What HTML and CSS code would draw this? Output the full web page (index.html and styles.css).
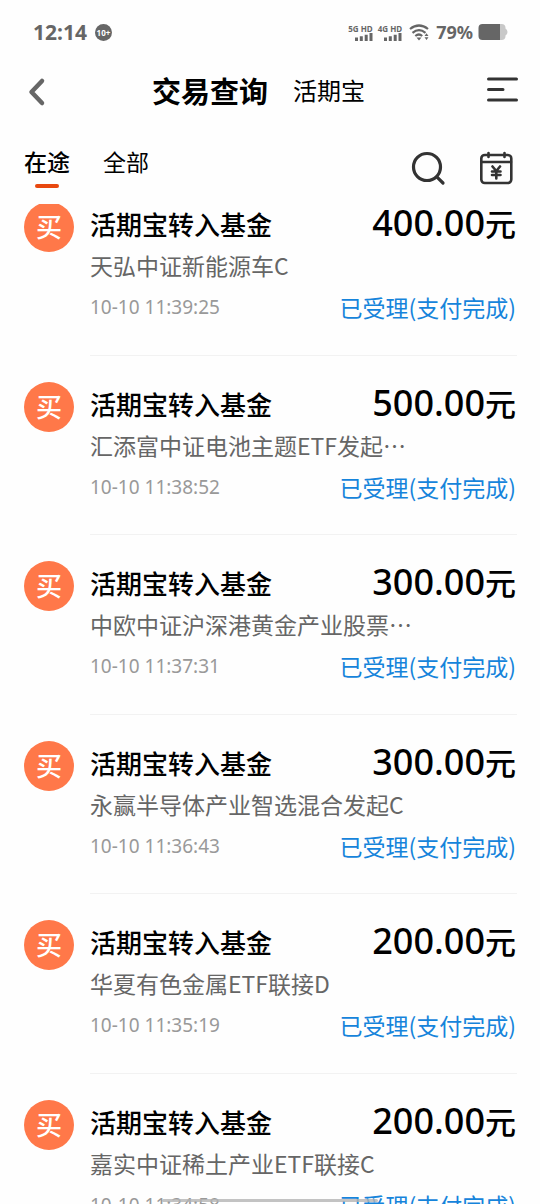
FILE: index.html
```html
<!DOCTYPE html>
<html lang="zh-CN">
    <head>
        <meta charset="utf-8" />
        <meta name="viewport" content="width=device-width, initial-scale=1" />
        <title>交易查询</title>
        <link rel="stylesheet" href="styles.css">
    </head>

    <body>
        <div class="status-bar">
            <span class="clock">12:14</span>
            <span class="notice">10+</span>
            <div class="signal">
                <span>5G HD</span>
                <svg width="18" height="8" viewBox="0 0 18 8"><path d="M1.5 4.5V8M6.3 3.2V8M11.2 1.8V8M16 0V8"/></svg>
            </div>
            <div class="signal">
                <span>4G HD</span>
                <svg width="18" height="8" viewBox="0 0 18 8"><path d="M1.5 4.5V8M6.3 3.2V8M11.2 1.8V8M16 0V8"/></svg>
            </div>
            <svg class="wifi" width="20" height="17" viewBox="0 0 20 17">
                <path d="M1 5Q10-2 19 5M3.5 8.8Q10 3.5 16.5 8.8M6.3 12Q10 9 13.2 12" fill="none" stroke="#666" stroke-width="2.2"/>
                <path d="M7.5 13.5h5L10 16.5zM15.5 12l2-2.7 2 2.7zM15.5 13.3l2 2.7 2-2.7z" fill="#666"/>
            </svg>
            <span class="percent">79%</span>
            <svg class="battery" width="30" height="16" viewBox="0 0 30 16">
                <path d="M22 0h1.5a4 4 0 0 1 4 4v.5q2 1 2 3.5t-2 3.5v.5a4 4 0 0 1-4 4H22z" fill="#c8c8c8"/>
                <path d="M4.5 0H22v16H4.5a4 4 0 0 1-4-4V4a4 4 0 0 1 4-4z" fill="#666"/>
            </svg>
        </div>

        <header class="header">
            <button class="icon-button" type="button" aria-label="返回">
                <svg width="32" height="32" viewBox="0 0 32 32"><path d="M20 6L9.5 17L20 28" fill="none" stroke="#666" stroke-width="4.5" stroke-linecap="round" stroke-linejoin="round"/></svg>
            </button>
            <div class="heading">
                <h1>交易查询</h1>
                <span>活期宝</span>
            </div>
            <button class="icon-button" type="button" aria-label="菜单">
                <svg width="32" height="32" viewBox="0 0 32 32"><path d="M1.5 4H29.5M1.5 14.5H16M1.5 25H29.5" fill="none" stroke="#333" stroke-width="3" stroke-linecap="round"/></svg>
            </button>
        </header>

        <nav class="tabs">
            <button class="tab active" type="button">在途</button>
            <button class="tab" type="button">全部</button>
            <div class="tools">
                <button class="icon-button" type="button" aria-label="搜索">
                    <svg width="36" height="36" viewBox="0 0 36 36"><g fill="none" stroke="#333" stroke-width="3.2" stroke-linecap="round"><circle cx="17" cy="17" r="13.5"/><path d="M26.8 26.8L33 33"/></g></svg>
                </button>
                <button class="icon-button" type="button" aria-label="日历">
                    <svg width="36" height="36" viewBox="0 0 36 36"><g fill="none" stroke="#333" stroke-width="2.6" stroke-linecap="round"><rect x="3.3" y="5" width="30" height="28" rx="3.5"/><path d="M3.5 12H33M10.5 3V7M26.5 3V7M14.5 16.5L18.3 21L22 16.5M18.3 21V28.5M14 21.5H22.5M14 25H22.5"/></g></svg>
                </button>
            </div>
        </nav>

        <main class="list">
            <ul>
                <li class="record">
                    <span class="badge">买</span>
                    <div class="detail">
                        <div class="row"><h2>活期宝转入基金</h2><span class="amount">400.00<small>元</small></span></div>
                        <p class="fund">天弘中证新能源车C</p>
                        <div class="row"><time>10-10 11:39:25</time><span class="state">已受理(支付完成)</span></div>
                    </div>
                </li>
                <li class="record">
                    <span class="badge">买</span>
                    <div class="detail">
                        <div class="row"><h2>活期宝转入基金</h2><span class="amount">500.00<small>元</small></span></div>
                        <p class="fund">汇添富中证电池主题ETF发起…</p>
                        <div class="row"><time>10-10 11:38:52</time><span class="state">已受理(支付完成)</span></div>
                    </div>
                </li>
                <li class="record">
                    <span class="badge">买</span>
                    <div class="detail">
                        <div class="row"><h2>活期宝转入基金</h2><span class="amount">300.00<small>元</small></span></div>
                        <p class="fund">中欧中证沪深港黄金产业股票…</p>
                        <div class="row"><time>10-10 11:37:31</time><span class="state">已受理(支付完成)</span></div>
                    </div>
                </li>
                <li class="record">
                    <span class="badge">买</span>
                    <div class="detail">
                        <div class="row"><h2>活期宝转入基金</h2><span class="amount">300.00<small>元</small></span></div>
                        <p class="fund">永赢半导体产业智选混合发起C</p>
                        <div class="row"><time>10-10 11:36:43</time><span class="state">已受理(支付完成)</span></div>
                    </div>
                </li>
                <li class="record">
                    <span class="badge">买</span>
                    <div class="detail">
                        <div class="row"><h2>活期宝转入基金</h2><span class="amount">200.00<small>元</small></span></div>
                        <p class="fund">华夏有色金属ETF联接D</p>
                        <div class="row"><time>10-10 11:35:19</time><span class="state">已受理(支付完成)</span></div>
                    </div>
                </li>
                <li class="record">
                    <span class="badge">买</span>
                    <div class="detail">
                        <div class="row"><h2>活期宝转入基金</h2><span class="amount">200.00<small>元</small></span></div>
                        <p class="fund">嘉实中证稀土产业ETF联接C</p>
                        <div class="row"><time>10-10 11:34:58</time><span class="state">已受理(支付完成)</span></div>
                    </div>
                </li>
            </ul>
        </main>
        <div class="home-bar"></div>
    </body>
</html>
```

FILE: styles.css
```css
* {
    box-sizing: border-box;
}
body {
    display: flex;
    flex-direction: column;
    height: 100vh;
    margin: 0;
    overflow: hidden;
    background-color: #fefefe;
    color: #000;
    font-family: "Noto Sans CJK SC", sans-serif;
}
h1, h2, p, ul {
    margin: 0;
    padding: 0;
}
button {
    padding: 0;
    border: 0;
    background: none;
    color: inherit;
    font-family: inherit;
}
svg {
    display: block;
}

/* Status bar */
.status-bar {
    display: flex;
    align-items: center;
    flex: none;
    height: 64px;
    padding: 0 32px 0 33px;
    color: #666;
    font-family: "Noto Sans", sans-serif;
    font-weight: 700;
}
.clock {
    font-size: 21px;
}
.notice {
    width: 17px;
    height: 17px;
    margin: 0 auto 0 8px;
    border-radius: 50%;
    background-color: #666;
    color: #fff;
    font-size: 8px;
    line-height: 17px;
    text-align: center;
}
.signal {
    display: flex;
    flex-direction: column;
    align-items: flex-end;
    margin-right: 5px;
    font-size: 8px;
    line-height: 9px;
}
.signal path {
    stroke: #666;
    stroke-width: 3;
}
.wifi {
    margin: 0 7px 0 2px;
}
.percent {
    margin-right: 5px;
    font-size: 18px;
}

/* Header */
.header {
    display: flex;
    align-items: center;
    flex: none;
    height: 54px;
    padding: 0 21px 0 22px;
}
.heading {
    display: flex;
    flex: 1;
    align-items: center;
    justify-content: center;
    gap: 25px;
    padding: 0 24px 3px 0;
    font-size: 24px;
}
.heading h1 {
    font-size: 29px;
    font-weight: 700;
}

/* Tabs */
.tabs {
    display: flex;
    flex: none;
    gap: 33px;
    height: 86px;
    padding: 26px 26px 0 24px;
}
.tab {
    display: flex;
    flex-direction: column;
    align-items: center;
    height: 44px;
    font-size: 23px;
    line-height: 34px;
}
.active {
    font-weight: 500;
}
.active::after {
    content: "";
    width: 24px;
    height: 4px;
    margin-top: 6px;
    border-radius: 2px;
    background-color: #e8480f;
}
.tools {
    display: flex;
    gap: 32px;
    height: 48px;
    margin-left: auto;
}

/* Records, scrolled so that the first one sits partly under the tabs */
.list {
    flex: 1;
    min-height: 0;
    overflow: hidden;
}
.list ul {
    margin-top: -28px;
    list-style: none;
}
.record {
    display: flex;
    gap: 16px;
    height: 180px;
    padding: 0 23px 0 24px;
}
.record:nth-child(even) {
    height: 179px;
}
.badge {
    flex: none;
    width: 50px;
    height: 50px;
    margin-top: 26px;
    border-radius: 50%;
    background-color: #ff7849;
    color: #fff;
    font-size: 26px;
    font-weight: 500;
    line-height: 48px;
    text-align: center;
}
.detail {
    flex: 1;
    min-width: 0;
    padding-top: 26px;
    border-bottom: 1px solid #f2f2f2;
}
.row {
    display: flex;
    align-items: center;
    justify-content: space-between;
    height: 42px;
    padding-right: 1px;
}
.row h2 {
    font-size: 26px;
    font-weight: 500;
}
.amount {
    font-family: "Noto Sans", "Noto Sans CJK SC", sans-serif;
    font-size: 36px;
    font-weight: 500;
    line-height: 36px;
}
.amount small {
    font-size: 31px;
}
.fund {
    overflow: hidden;
    color: #666;
    font-size: 23px;
    line-height: 42px;
    white-space: nowrap;
}
.row time {
    color: #999;
    font-family: "Noto Sans", sans-serif;
    font-size: 19px;
}
.state {
    color: #1684db;
    font-size: 23px;
}
.home-bar {
    position: fixed;
    bottom: 2px;
    left: 30%;
    right: 30%;
    height: 3px;
    border-radius: 2px;
    background-color: rgba(180, 180, 180, 0.8);
}
```
